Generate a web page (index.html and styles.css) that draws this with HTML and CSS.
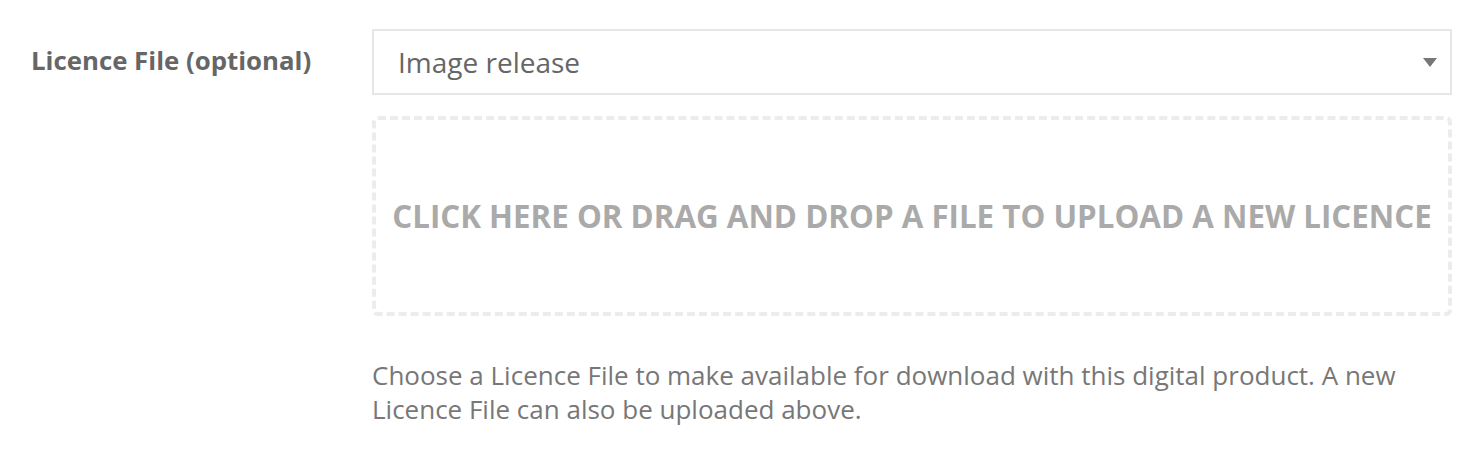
FILE: index.html
```html
<!DOCTYPE html>
<html lang="en">
<head>
    <meta charset="UTF-8">
    <meta name="viewport" content="width=device-width, initial-scale=1.0">
    <title>Licence File</title>
    <link rel="stylesheet" href="styles.css">
</head>
<body>
    <div class="form-row">
        <label class="form-label" for="licence">Licence File (optional)</label>
        <div class="form-field">
            <div class="select-wrap">
                <select id="licence" class="select">
                    <option>Image release</option>
                </select>
                <svg class="select-arrow" width="14" height="9" viewBox="0 0 14 9">
                    <path d="M0 0 H14 L7 9 Z" fill="#777"/>
                </svg>
            </div>
            <div class="dropzone">
                <span>Click here or drag and drop a file to upload a new licence</span>
            </div>
            <p class="help-text">Choose a Licence File to make available for download with this digital product. A new Licence File can also be uploaded above.</p>
        </div>
    </div>
</body>
</html>
```

FILE: styles.css
```css
body {
    margin: 0;
    font-family: "Open Sans", sans-serif;
    color: #666;
    background: #fff;
}
.form-row {
    display: grid;
    grid-template-columns: 341px 1080px;
    padding: 29px 0 0 31px;
}
.form-label {
    font-size: 25.8px;
    font-weight: bold;
    color: #666;
    padding-top: 13px;
}
.select-wrap {
    position: relative;
}
.select {
    appearance: none;
    -webkit-appearance: none;
    display: block;
    width: 100%;
    height: 66px;
    border: 2px solid #e6e6e6;
    border-radius: 0;
    background: #fff;
    font-family: "Open Sans", sans-serif;
    font-size: 28px;
    color: #666;
    padding: 0 24px;
    outline: none;
}
.select-arrow {
    position: absolute;
    right: 15px;
    top: 29px;
    pointer-events: none;
}
.dropzone {
    margin-top: 21px;
    height: 192px;
    border: 4px dashed #ececec;
    border-radius: 6px;
    display: flex;
    align-items: center;
    justify-content: center;
    cursor: pointer;
}
.dropzone span {
    font-size: 31.3px;
    font-weight: bold;
    text-transform: uppercase;
    color: #aaa;
}
.help-text {
    margin: 42px 0 0;
    font-size: 26px;
    line-height: 34px;
    color: #777;
}
```
